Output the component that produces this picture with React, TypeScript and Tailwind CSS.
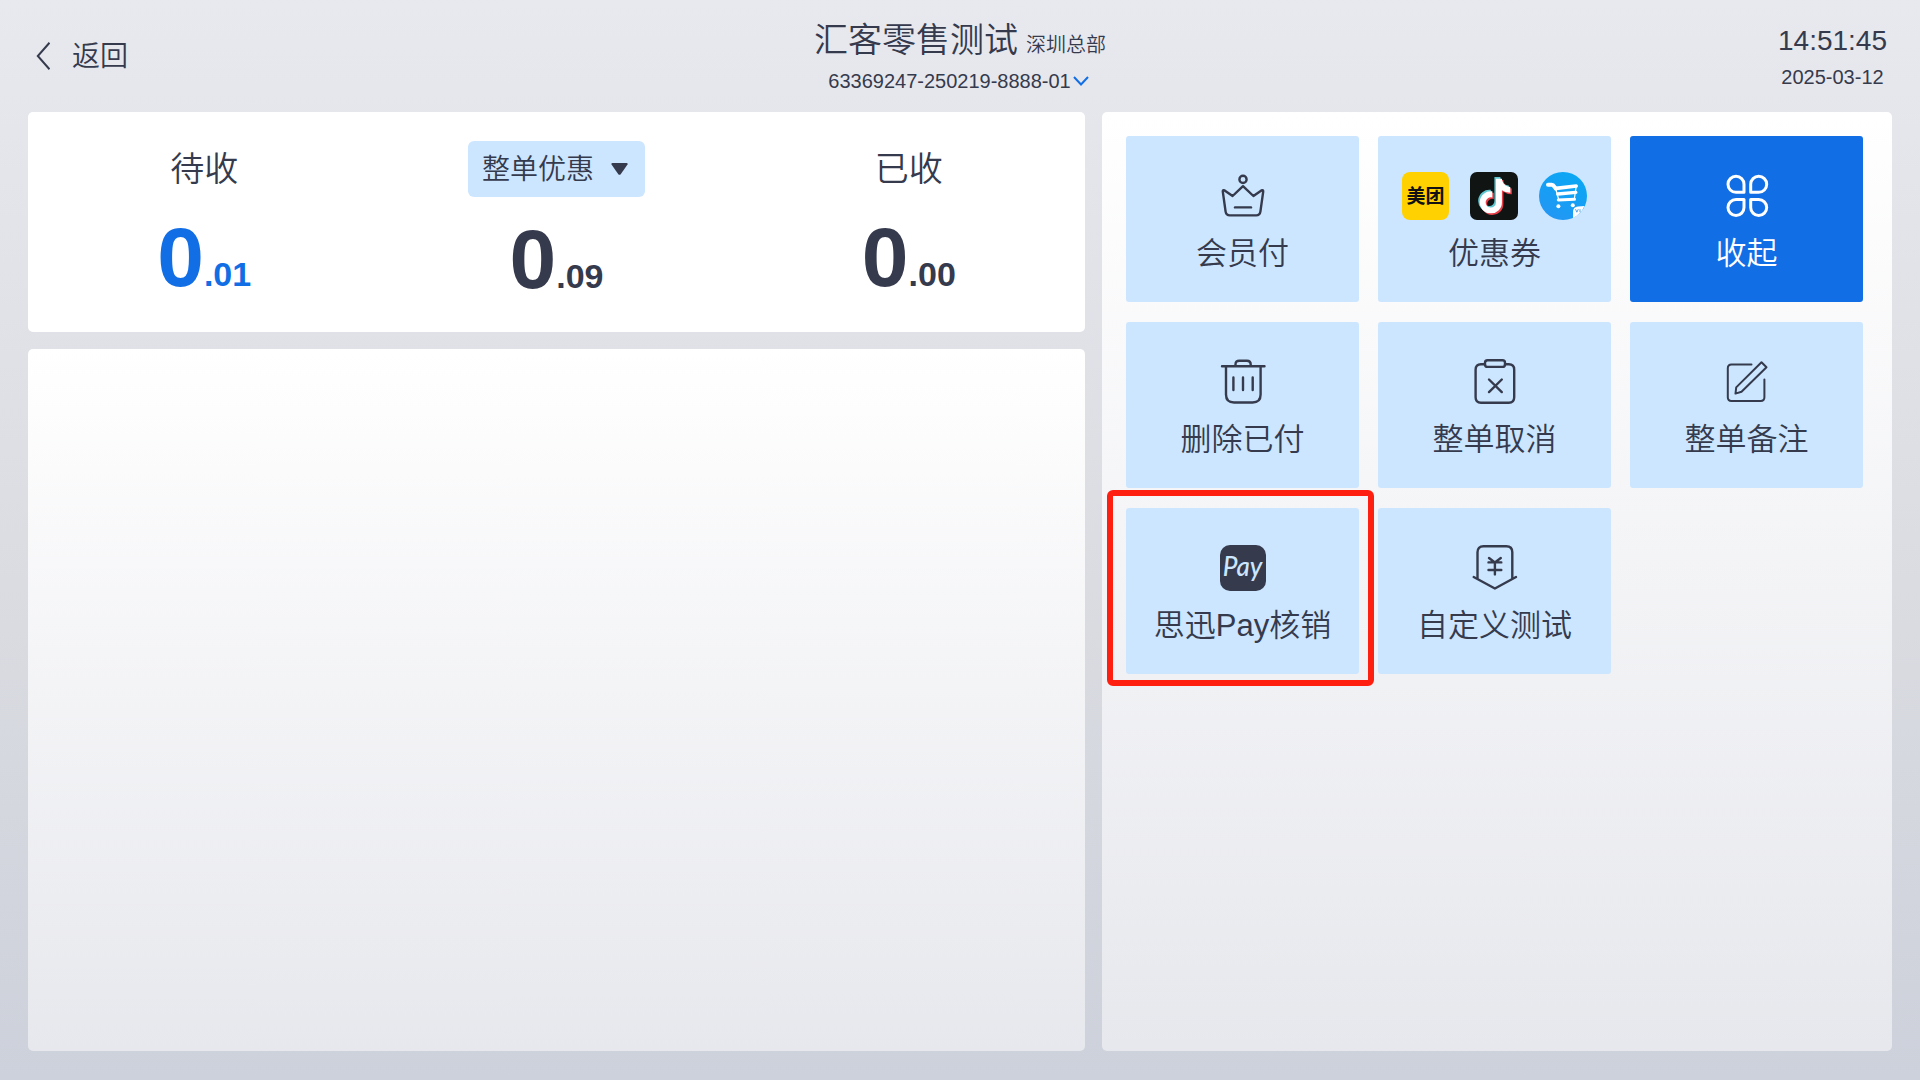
import { useState } from "react";
import type { ReactNode } from "react";
import { FaTiktok } from "react-icons/fa6";
import clsx from "clsx";

type LineIconProps = {
  children: ReactNode;
  width?: number;
};

// shared wrapper for the outline icons
function LineIcon({ children, width = 2.4 }: LineIconProps) {
  return (
    <svg
      viewBox="0 0 48 48"
      className="size-12"
      fill="none"
      stroke="currentColor"
      strokeWidth={width}
      strokeLinecap="round"
      strokeLinejoin="round"
      aria-hidden="true"
    >
      {children}
    </svg>
  );
}

function CrownIcon() {
  return (
    <LineIcon>
      <circle cx="24" cy="7.4" r="3.6" />
      <path d="M24 14.2 34.4 24l8-5.6q2-1 1.8 1.2l-2.8 20q-.6 3.8-4.2 3.8H10.8q-3.6 0-4.2-3.8l-2.8-20q-.2-2.2 1.8-1.2l8 5.6z" />
      <path d="M16 35.4h16" />
    </LineIcon>
  );
}

function CloverIcon() {
  return (
    <LineIcon width={3}>
      <path d="M21 20.3h-8a8 8 0 1 1 8-8z" />
      <path d="M27.7 20.3h8a8 8 0 1 0-8-8z" />
      <path d="M21 27.5h-8a8 8 0 1 0 8 8z" />
      <path d="M27.7 27.5h8a8 8 0 1 1-8 8z" />
    </LineIcon>
  );
}

function TrashIcon() {
  return (
    <LineIcon>
      <path d="M3 8.3h42.5M16.5 8V6.5q0-3.8 3.8-3.8h7.6q3.8 0 3.8 3.8V8" />
      <path d="M7 8.5v28q0 8 8 8h18.6q8 0 8-8v-28" />
      <path d="M14.4 19.5v12.5M24 19.5v12.5M33.7 19.5v12.5" />
    </LineIcon>
  );
}

function CancelOrderIcon() {
  return (
    <LineIcon>
      <rect x="14" y="2.3" width="20" height="6.6" rx="2.5" />
      <path d="M14 6.3H10q-5.4 0-5.4 5.4v27.6q0 5.4 5.4 5.4h27.8q5.4 0 5.4-5.4V11.7q0-5.4-5.4-5.4H34" />
      <path d="M18 21.5l12.8 12.6M30.8 21.5 18 34.1" />
    </LineIcon>
  );
}

function EditIcon() {
  return (
    <LineIcon width={2}>
      <path d="M28.5 6.5H8.5q-3.7 0-3.7 3.7v29.1q0 3.7 3.7 3.7h29.2q3.7 0 3.7-3.7V21.5" />
      <path d="M38.5 4.2l5 5-25 24.6-6 1.8.7-6.2z" />
    </LineIcon>
  );
}

function YuanShieldIcon() {
  return (
    <LineIcon>
      <path d="M6.5 34V8.3q0-6 6-6h22.8q6 0 6 6V34" />
      <path d="M2.7 33l21.2 11.5L45 33" />
      <path d="M18 14l5.9 4.5L29.8 14M17.5 18.4h12.8M17.5 26h12.8M23.9 18.4v12" />
    </LineIcon>
  );
}

function PayIcon() {
  return (
    <span className="flex size-[46px] items-center justify-center rounded-[10px] bg-[#353a4d] pb-1 font-['Lato',sans-serif] text-[26px] leading-none font-medium italic text-[#cce6ff]">
      Pay
    </span>
  );
}

function CouponIcons() {
  return (
    <span className="flex items-center gap-[21px]">
      <span className="flex h-12 w-[47px] items-center justify-center rounded-lg bg-[#ffd100] text-[19px] leading-none font-bold whitespace-nowrap text-[#111]">
        美团
      </span>
      <svg viewBox="0 0 48 48" className="size-12" aria-hidden="true">
        <rect width="48" height="48" rx="7" fill="#101412" />
        <FaTiktok x={6} y={5} size={35} color="#5fc6cf" />
        <FaTiktok x={9} y={8} size={35} color="#e5404a" />
        <FaTiktok x={7.5} y={6.5} size={35} color="#fff" />
      </svg>
      <svg viewBox="0 0 48 48" className="size-12" aria-hidden="true">
        <defs>
          <linearGradient id="cart" x1="0.8" y1="0" x2="0.2" y2="1">
            <stop offset="0" stopColor="#08a8f4" />
            <stop offset="1" stopColor="#2496f4" />
          </linearGradient>
        </defs>
        <circle cx="24" cy="24" r="24" fill="url(#cart)" />
        <g fill="none" stroke="#fff" strokeLinecap="round" strokeLinejoin="round">
          <path d="M9 12.8h3.5q1.8.2 2.8 1.8l1.5 2" strokeWidth="4" />
          <path d="M17 16.4l20.2-2.4" strokeWidth="3.6" />
          <path d="M18.8 22l18-1.6" strokeWidth="3.4" />
          <path d="M19.3 28l16.2-.8" strokeWidth="3" />
          <path d="M16.5 16l3.3 12M37.2 14.5l-1.8 12" strokeWidth="1.2" />
        </g>
        <circle cx="19.4" cy="34.3" r="2" fill="#fff" />
        <circle cx="33.8" cy="33.3" r="2" fill="#fff" />
        <path d="M34 46v-6q0-5 5-5.4l6.5-.6Q42 42 34 46z" fill="#fff" />
        <path d="M36.5 37.2l1.4 3 1.4-3M41 37.2v3" fill="none" stroke="#2b8fe0" strokeWidth="0.8" />
      </svg>
    </span>
  );
}

type Tile = {
  label: string;
  icon: ReactNode;
  primary?: boolean;
  marked?: boolean;
};

const tiles: Tile[] = [
  { label: "会员付", icon: <CrownIcon /> },
  { label: "优惠券", icon: <CouponIcons /> },
  { label: "收起", icon: <CloverIcon />, primary: true },
  { label: "删除已付", icon: <TrashIcon /> },
  { label: "整单取消", icon: <CancelOrderIcon /> },
  { label: "整单备注", icon: <EditIcon /> },
  { label: "思迅Pay核销", icon: <PayIcon />, marked: true },
  { label: "自定义测试", icon: <YuanShieldIcon /> },
];

function ActionTile({ label, icon, primary, marked }: Tile) {
  return (
    <button
      type="button"
      className={clsx(
        "relative flex h-[166px] flex-col items-center rounded-[3px] pt-9",
        primary ? "bg-[#126ee4] text-white" : "bg-[#cce6ff]"
      )}
    >
      <span className="flex h-12 items-center">{icon}</span>
      <span className="mt-[14px] text-[31px] leading-10">{label}</span>
      {marked && (
        <span className="pointer-events-none absolute -top-[18px] -right-[15px] -bottom-3 -left-[19px] rounded-md border-6 border-[#ff1f10]" />
      )}
    </button>
  );
}

function Amount({ value, blue }: { value: string; blue?: boolean }) {
  const [whole, cents] = value.split(".");
  return (
    <p className={clsx("font-bold leading-[84px] whitespace-nowrap", blue && "text-[#126ee4]")}>
      <span className="text-[84px]">{whole}</span>
      <span className="text-[34px]">.{cents}</span>
    </p>
  );
}

function App() {
  const [now] = useState({ time: "14:51:45", date: "2025-03-12" });

  return (
    <div className="flex min-h-screen flex-col bg-linear-to-b from-[#e8e9ee] via-[#dcdde2] to-[#cdd1db] px-7 pb-[29px] font-['Liberation_Sans','Noto_Sans_CJK_SC',sans-serif] font-[350] text-[#353a4d]">
      <header className="grid h-28 grid-cols-3">
        <button type="button" className="flex h-28 items-center gap-[22px] justify-self-start pl-2 text-[28px]">
          <svg viewBox="0 0 14 28" className="h-7 w-[14px]" fill="none" stroke="currentColor" strokeWidth="2" aria-hidden="true">
            <path d="M13.5 .7 1.8 14l11.7 13.3" />
          </svg>
          <span className="pt-[2px]">返回</span>
        </button>
        <div className="flex flex-col items-center pt-4">
          <h1 className="flex items-baseline gap-2 text-[34px] leading-12 whitespace-nowrap">
            汇客零售测试
            <span className="text-[20px]">深圳总部</span>
          </h1>
          <button type="button" className="flex items-center gap-[2px] pr-[3px] text-[20px] leading-6 whitespace-nowrap">
            63369247-250219-8888-01
            <svg viewBox="0 0 16 10" className="h-[10px] w-4" fill="none" stroke="#126ee4" strokeWidth="2" aria-hidden="true">
              <path d="M1 1l7 7.5L15 1" />
            </svg>
          </button>
        </div>
        <div className="flex flex-col items-center justify-self-end pt-[25px] pr-[5px]">
          <time className="text-[28px] leading-8">{now.time}</time>
          <time className="mt-1 text-[20px] leading-8">{now.date}</time>
        </div>
      </header>

      <main className="grid flex-1 grid-cols-[1057fr_790fr] gap-[17px]">
        <div className="flex flex-col gap-[17px]">
          <section className="grid h-[220px] grid-cols-3 rounded-[5px] bg-white">
            <div className="flex flex-col items-center pt-[29px]">
              <h2 className="h-14 text-[34px] leading-[56px]">待收</h2>
              <div className="mt-[18px]">
                <Amount value="0.01" blue />
              </div>
            </div>
            <div className="flex flex-col items-center pt-[29px]">
              <button
                type="button"
                className="flex h-14 items-center gap-[17px] rounded-md bg-[#cce6ff] pr-[17px] pl-[14px] text-[28px] whitespace-nowrap"
              >
                <span className="pt-[2px]">整单优惠</span>
                <svg viewBox="0 0 17 12" className="h-3 w-[17px]" fill="currentColor" aria-hidden="true">
                  <path d="M1.5 0h14q1.5 0 1 1.4L9.7 11.2q-1.2 1.3-2.4 0L.5 1.4Q0 0 1.5 0z" />
                </svg>
              </button>
              <div className="mt-5">
                <Amount value="0.09" />
              </div>
            </div>
            <div className="flex flex-col items-center pt-[29px]">
              <h2 className="h-14 text-[34px] leading-[56px]">已收</h2>
              <div className="mt-[18px]">
                <Amount value="0.00" />
              </div>
            </div>
          </section>
          <section className="flex-1 rounded-[5px] bg-linear-to-b from-white to-[#e7e8ed]" />
        </div>

        <section className="rounded-[5px] bg-linear-to-b from-white to-[#e7e8ed] pt-6 pr-[29px] pl-6">
          <div className="grid grid-cols-3 gap-x-[19px] gap-y-5">
            {tiles.map((tile) => (
              <ActionTile key={tile.label} {...tile} />
            ))}
          </div>
        </section>
      </main>
    </div>
  );
}

export default App;
